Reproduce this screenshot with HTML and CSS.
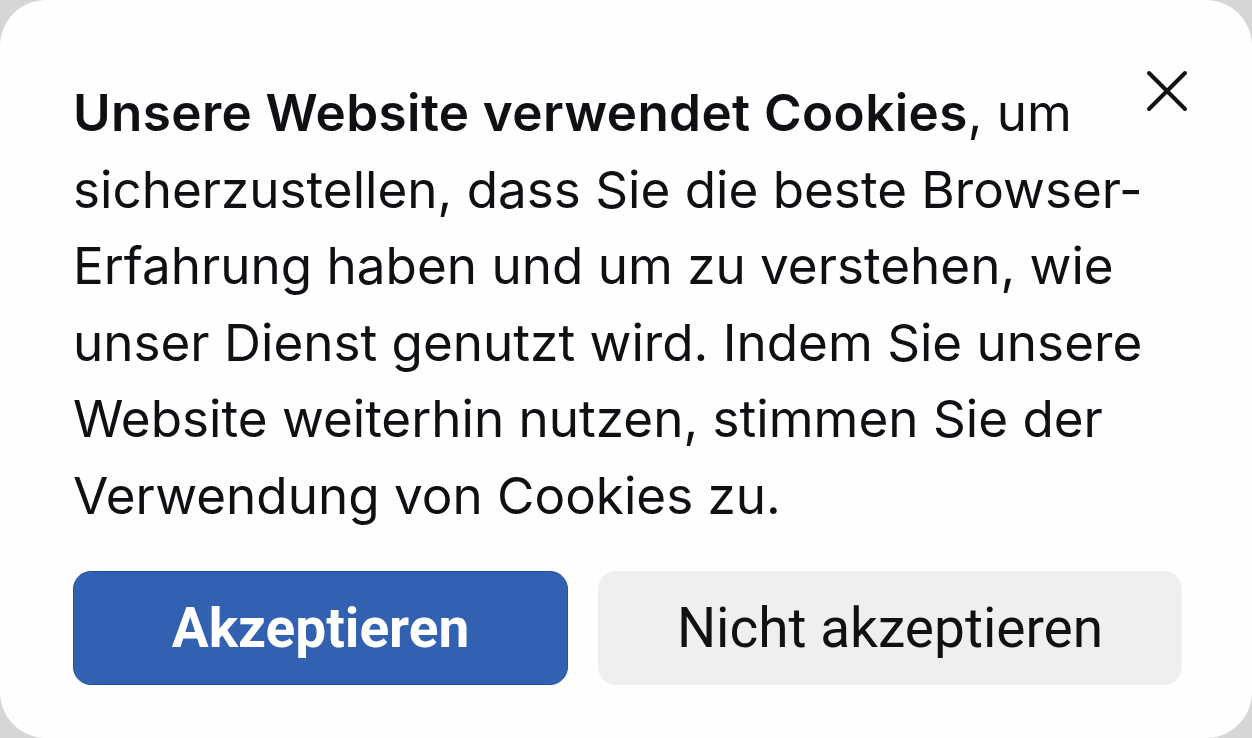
FILE: index.html
```html
<!DOCTYPE html>
<html lang="de">
<head>
    <meta charset="UTF-8">
    <meta name="viewport" content="width=device-width, initial-scale=1.0">
    <title>Cookie-Hinweis</title>
    <link rel="stylesheet" href="styles.css">
</head>
<body>

    <div class="banner">
        <button class="close" aria-label="Schließen">
            <svg width="42" height="42" viewBox="0 0 42 42"><path d="M3 3 L39 39 M39 3 L3 39" stroke="#111" stroke-width="4" stroke-linecap="round"/></svg>
        </button>
        <p class="text"><strong>Unsere Website verwendet Cookies</strong>, um sicherzustellen, dass Sie die beste Browser-Erfahrung haben und um zu verstehen, wie unser Dienst genutzt wird. Indem Sie unsere Website weiterhin nutzen, stimmen Sie der Verwendung von Cookies zu.</p>
        <div class="actions">
            <button class="btn accept">Akzeptieren</button>
            <button class="btn decline">Nicht akzeptieren</button>
        </div>
    </div>

</body>
</html>
```

FILE: styles.css
```css
* { margin: 0; padding: 0; box-sizing: border-box; }
html, body { height: 100%; }
body { background: #d6d6d6; font-family: Inter, "Noto Sans", sans-serif; color: #0e1014; }
.banner { position: relative; background: #fefefe; height: 100%; border-radius: 46px; padding: 74px 70px 0 73px; }
.text { font-size: 51.2px; line-height: 76.5px; padding-right: 20px; }
.text strong { font-weight: 600; letter-spacing: 0.4px; }
.close { position: absolute; top: 70px; right: 64px; background: none; border: none; cursor: pointer; }
.close svg { display: block; }
.actions { display: grid; grid-template-columns: 495fr 584fr; gap: 30px; margin-top: 38px; }
.btn { height: 114px; border-radius: 18px; font-family: Roboto, "Liberation Sans", sans-serif; font-size: 55px; cursor: pointer; }
.accept { background: #3161b0; border: 1px solid #2650a0; color: #fff; font-weight: 700; }
.decline { background: #efefef; border: none; color: #111; font-weight: 400; }
```
